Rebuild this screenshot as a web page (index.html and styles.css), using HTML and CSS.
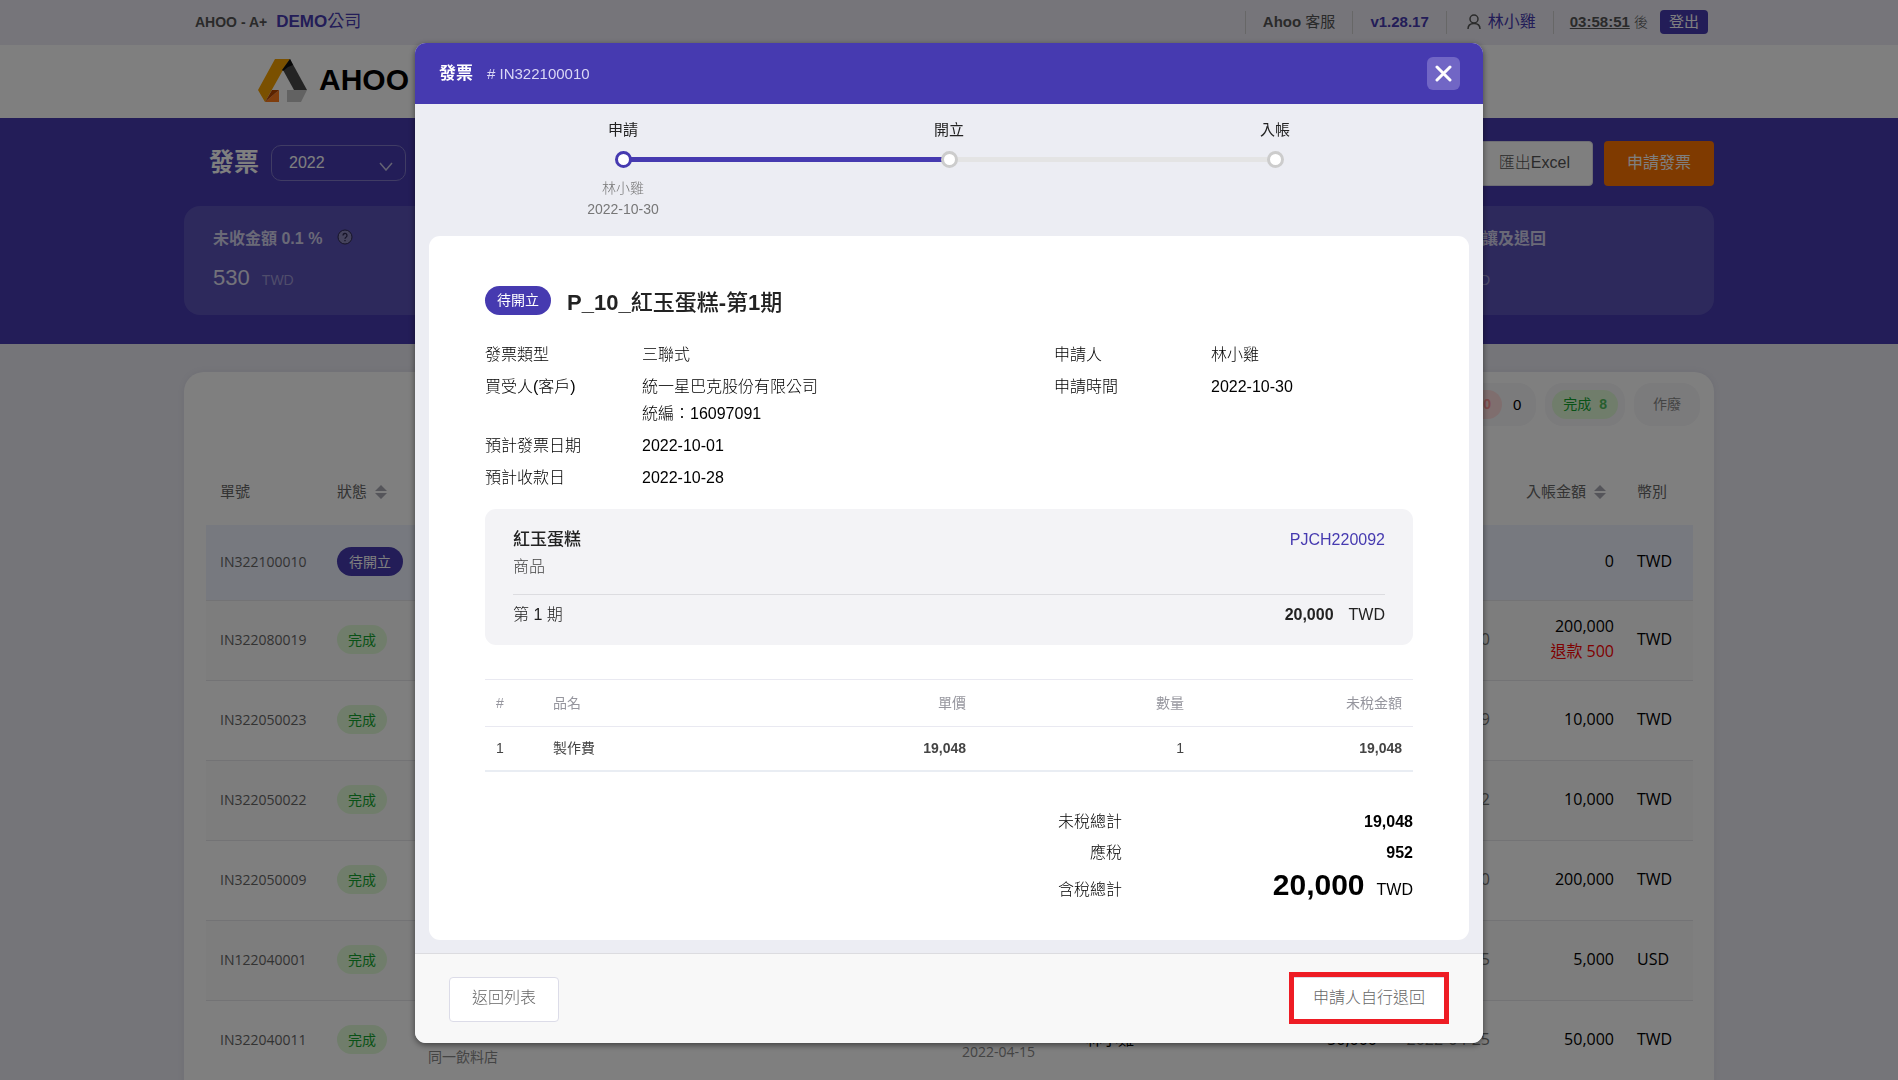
FILE: index.html
```html
<!DOCTYPE html>
<html lang="zh-Hant">
<head>
<meta charset="utf-8">
<meta name="viewport" content="width=device-width, initial-scale=1">
<title>發票 - AHOO</title>
<link rel="stylesheet" href="styles.css">
</head>
<body>
<div class="page">
  <div class="topbar">
    <div class="container topbar-inner">
      <div class="company"><b>AHOO - A+</b><a href="#">DEMO<span class="cjk">公司</span></a></div>
      <ul class="topnav">
        <li class="nav-support"><a href="#">Ahoo <span class="cjk">客服</span></a></li>
        <li class="nav-version"><a href="#">v1.28.17</a></li>
        <li class="nav-user">
          <svg width="14" height="16" viewBox="0 0 14 16" fill="none" stroke="#555" stroke-width="1.5"><circle cx="7" cy="5" r="4"/><path d="M1 15c0-3.5 2.5-5.5 6-5.5s6 2 6 5.5"/></svg>
          <a href="#">林小雞</a>
        </li>
        <li class="nav-session"><span><u>03:58:51</u> <span class="after">後</span></span><button class="logout" type="button">登出</button></li>
      </ul>
    </div>
  </div>
  <header class="brandbar">
    <div class="container brandbar-inner">
      <a class="brand" href="#">
        <svg width="50" height="44" viewBox="0 0 50 44"><path d="M17 0h15l-7 11L7 43 0 31z" fill="#f5a000"/><path d="M32 0l17 31H36L25 11z" fill="#484848"/><path d="M32 0l3 6-5 2-5 4-1-1z" fill="#111"/><path d="M21 31v12H7z" fill="#ff7a1a"/><path d="M14 31h7L7 43z" fill="#b84600"/><path d="M29 31h20l-6 12H29z" fill="#c4c4c4"/></svg>
        <span>AHOO</span>
      </a>
    </div>
  </header>
  <section class="hero">
    <div class="container">
      <div class="hero-head">
        <h1>發票</h1>
        <div class="select-wrap">
          <select aria-label="年度"><option>2022</option></select>
          <svg width="14" height="9" viewBox="0 0 14 9" fill="none" stroke="#c9c6e6" stroke-width="1.5"><path d="M1 1l6 7 6-7"/></svg>
        </div>
        <div class="hero-actions">
          <button class="btn btn-light" type="button">匯出Excel</button>
          <button class="btn btn-orange" type="button">申請發票</button>
        </div>
      </div>
      <div class="stats">
        <div class="stat">
          <h2>未收金額 0.1 % <svg width="16" height="16" viewBox="0 0 16 16"><circle cx="8" cy="8" r="7" fill="#8a86b8" stroke="#2c2850" stroke-width="1"/><path d="M6 6.500a2 2 0 1 1 3 1.700c-.8.500-1 .8-1 1.600M8 11v1.300" fill="none" stroke="#2c2850" stroke-width="1.300"/></svg></h2>
          <p>530 <small>TWD</small></p>
        </div>
        <div class="stat stat-last">
          <h2>發票折讓及退回</h2>
          <p>0 <small>TWD</small></p>
        </div>
      </div>
    </div>
  </section>
  <main class="container panel">
    <div class="tabs">
      <button class="tab" type="button"><span class="pill pill-red"><b>0</b></span><span class="count">0</span></button>
      <button class="tab" type="button"><span class="pill pill-green">完成 <b>8</b></span></button>
      <button class="tab tab-void" type="button">作廢</button>
    </div>
    <table class="list">
      <colgroup><col class="c-no"><col class="c-status"><col><col class="c-issued"><col class="c-person"><col class="c-amount"><col class="c-date"><col class="c-paid"><col class="c-cur"></colgroup>
      <thead>
        <tr><th>單號</th><th>狀態 <svg class="sort" width="12" height="14" viewBox="0 0 12 14"><path d="M6 0l6 6H0zM6 14l6-6H0z"/></svg></th><th></th><th></th><th></th><th></th><th></th><th class="num">入帳金額 <svg class="sort" width="12" height="14" viewBox="0 0 12 14"><path d="M6 0l6 6H0zM6 14l6-6H0z"/></svg></th><th>幣別</th></tr>
      </thead>
      <tbody>
        <tr class="selected"><td class="no">IN322100010</td><td><span class="pill pill-primary">待開立</span></td><td></td><td></td><td></td><td></td><td></td><td class="num">0</td><td>TWD</td></tr>
        <tr><td class="no">IN322080019</td><td><span class="pill pill-green">完成</span></td><td></td><td></td><td></td><td></td><td class="date">2022-08-30</td><td class="num">200,000<br><span class="refund">退款 500</span></td><td>TWD</td></tr>
        <tr><td class="no">IN322050023</td><td><span class="pill pill-green">完成</span></td><td></td><td></td><td></td><td></td><td class="date">2022-05-29</td><td class="num">10,000</td><td>TWD</td></tr>
        <tr><td class="no">IN322050022</td><td><span class="pill pill-green">完成</span></td><td></td><td></td><td></td><td></td><td class="date">2022-05-22</td><td class="num">10,000</td><td>TWD</td></tr>
        <tr><td class="no">IN322050009</td><td><span class="pill pill-green">完成</span></td><td></td><td></td><td></td><td></td><td class="date">2022-05-20</td><td class="num">200,000</td><td>TWD</td></tr>
        <tr><td class="no">IN122040001</td><td><span class="pill pill-green">完成</span></td><td></td><td></td><td></td><td></td><td class="date">2022-04-25</td><td class="num">5,000</td><td>USD</td></tr>
        <tr><td class="no">IN322040011</td><td><span class="pill pill-green">完成</span></td><td class="sub sub-client">同一飲料店</td><td class="sub">2022-04-15</td><td>林小雞</td><td class="num">50,000</td><td class="date">2022-04-25</td><td class="num">50,000</td><td>TWD</td></tr>
      </tbody>
    </table>
  </main>
</div>

<div class="overlay">
  <div class="modal" role="dialog" aria-modal="true" aria-labelledby="modal-title">
    <header class="modal-head">
      <h2 id="modal-title">發票</h2><span># IN322100010</span>
      <button class="close" type="button" aria-label="關閉"><svg width="17" height="17" viewBox="0 0 17 17" stroke="#fff" stroke-width="3" stroke-linecap="round"><path d="M2 2l13 13M15 2L2 15"/></svg></button>
    </header>
    <div class="modal-body">
      <ol class="steps">
        <li class="done"><span>申請</span><i></i><small>林小雞<br>2022-10-30</small></li>
        <li><span>開立</span><i></i></li>
        <li><span>入帳</span><i></i></li>
      </ol>
      <article class="sheet">
        <div class="sheet-title"><span class="pill pill-primary">待開立</span><h3>P_10_<span class="cjk">紅玉蛋糕</span>-<span class="cjk">第</span>1<span class="cjk">期</span></h3></div>
        <div class="facts">
          <dl>
            <dt>發票類型</dt><dd>三聯式</dd>
            <dt>買受人(客戶)</dt><dd>統一星巴克股份有限公司<br>統編：16097091</dd>
            <dt>預計發票日期</dt><dd>2022-10-01</dd>
            <dt>預計收款日</dt><dd>2022-10-28</dd>
          </dl>
          <dl>
            <dt>申請人</dt><dd>林小雞</dd>
            <dt>申請時間</dt><dd>2022-10-30</dd>
          </dl>
        </div>
        <section class="project">
          <div class="project-row"><h4>紅玉蛋糕</h4><a href="#">PJCH220092</a></div>
          <p>商品</p>
          <div class="project-row project-term"><span>第 1 期</span><span><b>20,000</b>TWD</span></div>
        </section>
        <table class="items">
          <colgroup><col class="i-no"><col><col class="i-price"><col class="i-qty"><col class="i-sum"></colgroup>
          <thead><tr><th>#</th><th>品名</th><th class="r">單價</th><th class="r">數量</th><th class="r">未稅金額</th></tr></thead>
          <tbody><tr><td>1</td><td class="name">製作費</td><td class="r"><b>19,048</b></td><td class="r">1</td><td class="r"><b>19,048</b></td></tr></tbody>
        </table>
        <dl class="totals">
          <dt>未稅總計</dt><dd><b>19,048</b></dd>
          <dt>應稅</dt><dd><b>952</b></dd>
          <dt>含稅總計</dt><dd class="grand"><b>20,000</b>TWD</dd>
        </dl>
      </article>
    </div>
    <footer class="modal-foot">
      <button class="btn btn-outline" type="button">返回列表</button>
      <div class="marked"><button class="btn btn-outline" type="button">申請人自行退回</button></div>
    </footer>
  </div>
</div>
</body>
</html>
```

FILE: styles.css
```css
* { box-sizing: border-box; }
html, body { height: 100%; }
body {
  margin: 0;
  overflow: hidden;
  background: #ebebf3;
  color: #000;
  font: 300 16px/27px "Liberation Sans", "Noto Sans CJK TC", sans-serif;
}
h1, h2, h3, h4, p, dl, dd, ol, ul { margin: 0; padding: 0; }
ol, ul { list-style: none; }
b { font-weight: 700; }
a { color: inherit; text-decoration: none; }
button, select { font: inherit; }
table { width: 100%; border-collapse: collapse; table-layout: fixed; }
.cjk { font-weight: 400; }
.page { height: 100vh; overflow: hidden; }
.container { width: 100%; max-width: 1530px; margin: 0 auto; }

/* top bar */
.topbar { background: #ecebf4; }
.topbar-inner { display: flex; align-items: center; justify-content: space-between; height: 45px; padding: 0 6px 1px 11px; line-height: 24px; }
.company { display: flex; gap: 9px; color: #555; font-size: 14px; }
.company a { color: #463ab0; font-size: 17px; font-weight: 700; }
.topnav { display: flex; font-size: 15px; }
.topnav li { display: flex; align-items: center; height: 23px; border-left: 1px solid #cfcfcf; padding: 0 17px; }
.nav-support { color: #555; font-weight: 700; }
.nav-version { color: #463ab0; font-weight: 700; }
.topnav .nav-user { gap: 7px; padding: 0 17px 0 20px; color: #463ab0; font-size: 16px; font-weight: 400; }
.topnav .nav-session { gap: 12px; padding: 0 0 0 16px; color: #555; }
.nav-session u { font-weight: 700; }
.after { font-size: 14px; }
.logout { width: 48px; height: 24px; border: 0; border-radius: 4px; padding: 0; background: #463ab0; color: #fff; font-size: 15px; line-height: 22px; font-weight: 400; }

/* brand */
.brandbar { background: #fff; }
.brandbar-inner { height: 73px; padding: 14px 74px; }
.brand { display: inline-flex; align-items: center; gap: 11px; height: 44px; color: #000; font-size: 30px; font-weight: 700; }
.brand span { padding-bottom: 4px; }

/* page header */
.hero { height: 226px; background: #463ab0; color: #fff; padding-top: 23px; }
.hero-head { display: flex; align-items: center; height: 45px; padding-left: 25px; }
.hero h1 { padding-bottom: 4px; font-size: 25px; line-height: 36px; }
.select-wrap { position: relative; height: 38px; margin-left: 12px; }
.select-wrap select { width: 135px; height: 36px; appearance: none; border: 1px solid #8079c8; border-radius: 10px; padding: 0 17px; background: transparent; color: #fff; }
.select-wrap svg { position: absolute; right: 13px; top: 17px; }
.hero-actions { display: flex; gap: 11px; margin-left: auto; }
.btn { height: 45px; border: 1px solid transparent; border-radius: 4px; padding: 0 22px 3px; }
.btn-light { background: #fff; border-color: #dcdce8; color: #555; }
.btn-orange { background: #ff7400; color: #fff; font-weight: 400; }
.stats { display: flex; justify-content: space-between; margin-top: 20px; height: 109px; border-radius: 16px; padding: 19px 168px 0 29px; background: #5b52b9; }
.stat h2 { color: #d5d2ee; font-size: 16px; line-height: 27px; white-space: nowrap; }
.stat h2 svg { margin-left: 10px; vertical-align: -1px; }
.stat p { margin-top: 12px; color: #e6e4f4; font-size: 22px; line-height: 28px; }
.stat small { margin-left: 6px; color: #9f9ad6; font-size: 14px; }

/* invoice list */
.panel { margin-top: 28px; min-height: 100%; border-radius: 20px; padding: 11px 21px 11px 22px; background: #fff; box-shadow: 0 0 10px rgba(60, 60, 110, .08); }
.tabs { display: flex; justify-content: flex-end; gap: 9px; margin-right: -7px; }
.tab { display: flex; align-items: center; height: 43px; border: 0; border-radius: 18px; padding: 0 7px; background: #f6f6f8; }
.tab .count { padding: 0 8px 0 11px; font-size: 15px; }
.tab-void { padding: 0 19px; color: #888; font-size: 14px; font-weight: 400; }
.pill { display: inline-block; border-radius: 15px; padding: 0 11px; font-size: 14px; font-weight: 400; line-height: 29px; white-space: nowrap; }
.pill-primary { padding: 0 12px; background: #463ab0; color: #fff; }
.pill-green { background: #e0fad6; color: #12a52e; }
.pill-red { background: #ffdcdc; color: #f77; }
.pill b { margin-left: 4px; opacity: .7; }
.list { margin-top: 31px; }
.list, .list td, .list th { font-family: "Open Sans", "Noto Sans CJK TC", sans-serif; font-weight: 400; }
.c-no { width: 117px; } .c-status { width: 91px; } .c-issued { width: 124px; } .c-person { width: 214px; }
.c-amount { width: 100px; } .c-date { width: 118px; } .c-paid { width: 119px; } .c-cur { width: 70px; }
.list th { height: 68px; padding: 0 14px; color: #666; font-size: 15px; text-align: left; white-space: nowrap; }
.list .sort { margin-left: 4px; fill: #aaaab4; vertical-align: -2px; }
.list td { height: 80px; padding: 0 14px 2px; line-height: 25px; white-space: nowrap; border-bottom: 1px solid #e6e6ea; }
.list tbody tr:nth-child(even) { background: #fafafa; }
.list .selected { background: #eef2ff; }
.list .selected td { height: 75px; }
.list .no { color: #666; font-size: 14px; }
.list .num { padding-right: 9px; text-align: right; }
.list th.num { padding-right: 17px; }
.list .date { color: #777; text-align: right; }
.list .sub { padding-top: 24px; color: #888; font-size: 14px; }
.list .sub-client { padding-top: 34px; }
.refund { color: #f00; }

/* dialog */
.overlay { position: fixed; inset: 0; padding-top: 43px; background: rgba(0, 0, 0, .5); }
.modal { width: 92%; max-width: 1068px; margin: 0 auto; border-radius: 11px; overflow: hidden; background: #ecedf3; box-shadow: 0 2px 6px rgba(0, 0, 0, .5); }
.modal-head { display: flex; align-items: center; gap: 14px; height: 61px; padding: 0 23px 0 24px; background: #463ab0; color: #dad7f5; font-size: 15px; }
.modal-head h2 { color: #fff; font-size: 17px; }
.close { display: flex; align-items: center; justify-content: center; width: 33px; height: 33px; margin-left: auto; border: 0; border-radius: 6px; padding: 0; background: #7166c5; }
.modal-body { padding: 12px 14px 13px; }
.steps { display: grid; grid-template-columns: repeat(3, 1fr); height: 120px; margin: 0 31px; text-align: center; }
.steps li { position: relative; }
.steps li > span { display: block; color: #222; font-size: 15px; line-height: 28px; font-weight: 400; }
.steps i { position: relative; z-index: 1; display: block; width: 17px; height: 17px; margin: 7px auto 0; border: 3px solid #ccc; border-radius: 50%; background: #fff; }
.steps .done i { border-color: #463ab0; }
.steps li:not(:last-child)::after { content: ""; position: absolute; left: 50%; top: 41px; width: 100%; height: 5px; background: #e4e4e4; }
.steps .done::after { background: #463ab0 !important; }
.steps small { display: block; margin-top: 10px; color: #777; font-size: 14px; line-height: 21px; }
.sheet { border-radius: 11px; padding: 50px 56px 37px; background: #fff; }
.sheet-title { display: flex; align-items: flex-start; gap: 16px; }
.sheet-title h3 { color: #222; font-size: 22px; line-height: 34px; }
.sheet-title .cjk { font-weight: 500; }
.facts { display: grid; grid-template-columns: 569fr 359fr; margin-top: 21px; }
.facts dl { display: grid; grid-template-columns: 157px 1fr; row-gap: 5px; align-content: start; }
.project { margin-top: 18px; border-radius: 11px; padding: 17px 28px; background: #f3f3f6; color: #222; height: 136px; }
.project-row { display: flex; justify-content: space-between; }
.project h4 { font-size: 17px; font-weight: 500; }
.project a { color: #463ab0; }
.project p { color: #444; }
.project-term { margin-top: 14px; border-top: 1px solid #dcdce0; padding-top: 6px; }
.project b { margin-right: 15px; }
.items { margin-top: 34px; border-top: 1px solid #e9e9f1; font-size: 14px; color: #444; }
.i-no { width: 57px; } .i-price { width: 150px; } .i-qty, .i-sum { width: 218px; }
.items th { height: 47px; padding: 0 11px; color: #96969e; font-weight: 400; text-align: left; border-bottom: 1px solid #e9e9f1; }
.items td { height: 44px; padding: 0 11px; border-bottom: 2px solid #e9edf3; }
.items .name { font-weight: 400; }
.items .r { text-align: right; }
.totals { display: grid; grid-template-columns: 637px 1fr; row-gap: 4px; margin-top: 36px; text-align: right; align-items: baseline; }
.totals dd { white-space: nowrap; }
.totals .grand b { margin-right: 12px; font-size: 30px; line-height: 30px; }
.modal-foot { display: flex; align-items: flex-start; justify-content: space-between; height: 90px; border-top: 1px solid #dcdce0; padding: 23px 34px; background: #f8f8f8; }
.btn-outline { border-color: #dcdce8; background: #fff; color: #666; }
.marked { position: relative; }
.marked .btn { width: 160px; }
.marked::after { content: ""; position: absolute; inset: -5px 0 -2px; border: 5px solid #ee1c24; pointer-events: none; }
```
